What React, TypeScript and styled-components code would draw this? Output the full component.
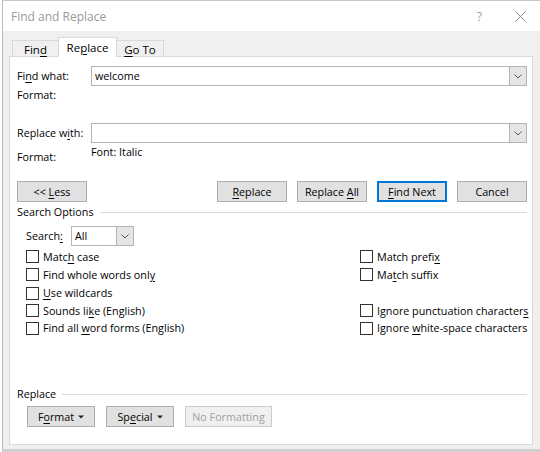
import styled, { createGlobalStyle } from 'styled-components';

const GlobalStyle = createGlobalStyle`
  html, body {
    margin: 0;
    padding: 0;
    background: #ffffff;
  }
  body {
    font-family: "Open Sans", "Noto Sans", sans-serif;
    font-size: 10.75px;
    color: #000;
  }
  u {
    text-underline-offset: 2px;
  }
`;

const Window = styled.div`
  box-sizing: border-box;
  width: 538px;
  height: 452px;
  margin-left: 2px;
  border-left: 1px solid #bcbcbc;
  border-top: 1px solid #c8c8c8;
  border-bottom: 3px solid #cfcfcf;
  background: #f0f0f0;
  display: flex;
  flex-direction: column;
`;

const TitleBar = styled.div`
  height: 30px;
  background: #ffffff;
  display: flex;
  align-items: center;
  padding-left: 8px;
  padding-right: 14px;
`;

const Title = styled.div`
  flex: 1;
  color: #9a9a9a;
  font-size: 12px;
`;

const TitleButtons = styled.div`
  display: flex;
  align-items: center;
  gap: 33px;
  color: #a0a0a0;
`;

const Body = styled.div`
  flex: 1;
  display: flex;
  flex-direction: column;
  padding: 6px 7px 4px 6px;
`;

const TabStrip = styled.div`
  display: flex;
  align-items: flex-end;
  padding-left: 3px;
  height: 20px;
  margin-bottom: -1px;
  position: relative;
  z-index: 1;
`;

const Tab = styled.div<{ $active?: boolean; $w: number }>`
  box-sizing: border-box;
  width: ${(p) => p.$w}px;
  height: ${(p) => (p.$active ? 20 : 17)}px;
  display: flex;
  align-items: center;
  justify-content: center;
  padding-top: ${(p) => (p.$active ? 0 : 1)}px;
  background: ${(p) => (p.$active ? '#ffffff' : '#f0f0f0')};
  border: 1px solid #d9d9d9;
  border-bottom: ${(p) => (p.$active ? '1px solid #ffffff' : '1px solid #d9d9d9')};
  margin-left: ${(p) => (p.$active ? -1 : 0)}px;
  margin-right: ${(p) => (p.$active ? -1 : 0)}px;
  font-size: 11.5px;
`;

const Panel = styled.div`
  flex: 1;
  background: #ffffff;
  border: 1px solid #d9d9d9;
  padding: 9px 5px 17px 7px;
  display: flex;
  flex-direction: column;
`;

const FieldRow = styled.div`
  display: grid;
  grid-template-columns: 74px 1fr;
  align-items: center;
  height: 20px;
`;

const FormatRow = styled.div<{ $h: number }>`
  display: grid;
  grid-template-columns: 74px 1fr;
  align-items: start;
  height: ${(p) => p.$h}px;
`;

const Label = styled.div<{ $top?: number }>`
  padding-top: ${(p) => p.$top ?? 0}px;
  line-height: 14px;
  white-space: nowrap;
`;

const Combo = styled.div<{ $w?: number }>`
  box-sizing: border-box;
  display: flex;
  height: 20px;
  width: ${(p) => (p.$w ? `${p.$w}px` : 'auto')};
  border: 1px solid #b4b4b4;
  background: #fff;
`;

const ComboText = styled.div`
  flex: 1;
  padding-left: 3px;
  display: flex;
  align-items: center;
  line-height: 14px;
`;

const DropButton = styled.div`
  width: 16px;
  background: #e5e5e5;
  border-left: 1px solid #b4b4b4;
  display: flex;
  align-items: center;
  justify-content: center;
`;

const Spacer = styled.div<{ $h: number }>`
  height: ${(p) => p.$h}px;
  flex-shrink: 0;
`;

const ButtonRow = styled.div`
  display: flex;
  align-items: center;
  gap: 10px;
`;

const Button = styled.div<{ $w?: number; $default?: boolean; $disabled?: boolean }>`
  box-sizing: border-box;
  width: ${(p) => p.$w ?? 70}px;
  height: 21px;
  display: flex;
  align-items: center;
  justify-content: center;
  gap: 4px;
  background: ${(p) => (p.$disabled ? '#f0f0f0' : '#e1e1e1')};
  border: 1px solid ${(p) => (p.$default ? '#0078d7' : p.$disabled ? '#cccccc' : '#adadad')};
  box-shadow: ${(p) => (p.$default ? 'inset 0 0 0 1px #0078d7' : 'none')};
  color: ${(p) => (p.$disabled ? '#a0a0a0' : '#000')};
  white-space: nowrap;
`;

const GroupHeader = styled.div`
  display: flex;
  align-items: center;
  gap: 6px;
  height: 14px;
  &::after {
    content: '';
    flex: 1;
    height: 1px;
    background: #dcdcdc;
  }
`;

const SearchRow = styled.div`
  display: flex;
  align-items: center;
  gap: 8px;
  padding-left: 9px;
  height: 20px;
`;

const OptionsGrid = styled.div`
  display: grid;
  grid-template-columns: 334px 1fr;
  grid-template-rows: 17px 19px 18px 17px 18px;
  padding-left: 9px;
`;

const Option = styled.div`
  display: flex;
  align-items: center;
  gap: 4px;
  white-space: nowrap;
`;

const Box = styled.span`
  box-sizing: border-box;
  width: 13px;
  height: 13px;
  border: 1px solid #333;
  background: #fff;
  flex-shrink: 0;
`;

const Fill = styled.div`
  flex: 1;
`;

const BottomButtons = styled.div`
  display: flex;
  gap: 11px;
  padding-left: 10px;
`;

const Chevron = () => (
  <svg width="8" height="5" viewBox="0 0 8 5">
    <path d="M0.5 0.5 L4 4 L7.5 0.5" fill="none" stroke="#555" strokeWidth="1" />
  </svg>
);

const Caret = () => (
  <svg width="6" height="4" viewBox="0 0 6 4">
    <path d="M0 0.5 H6 L3 3.5 Z" fill="#222" />
  </svg>
);

function Check({ children }: { children: React.ReactNode }) {
  return (
    <Option>
      <Box />
      <span>{children}</span>
    </Option>
  );
}

export default function App() {
  return (
    <>
      <GlobalStyle />
      <Window>
        <TitleBar>
          <Title>Find and Replace</Title>
          <TitleButtons>
            <span style={{ fontSize: 12 }}>?</span>
            <svg width="11" height="11" viewBox="0 0 11 11">
              <path d="M0.5 0.5 L10.5 10.5 M10.5 0.5 L0.5 10.5" stroke="#8a8a8a" strokeWidth="1" />
            </svg>
          </TitleButtons>
        </TitleBar>
        <Body>
          <TabStrip>
            <Tab $w={47}><span>Fin<u>d</u></span></Tab>
            <Tab $w={59} $active><span>Re<u>p</u>lace</span></Tab>
            <Tab $w={48}><span><u>G</u>o To</span></Tab>
          </TabStrip>
          <Panel>
            <FieldRow>
              <Label>Fi<u>n</u>d what:</Label>
              <Combo>
                <ComboText>welcome</ComboText>
                <DropButton><Chevron /></DropButton>
              </Combo>
            </FieldRow>
            <FormatRow $h={37}>
              <Label $top={2}>Format:</Label>
            </FormatRow>
            <FieldRow>
              <Label>Replace w<u>i</u>th:</Label>
              <Combo>
                <ComboText />
                <DropButton><Chevron /></DropButton>
              </Combo>
            </FieldRow>
            <FormatRow $h={38}>
              <Label $top={7}>Format:</Label>
              <Label $top={2}>Font: Italic</Label>
            </FormatRow>
            <ButtonRow>
              <Button><span>&lt;&lt; <u>L</u>ess</span></Button>
              <Fill />
              <Button><span><u>R</u>eplace</span></Button>
              <Button><span>Replace <u>A</u>ll</span></Button>
              <Button $default><span><u>F</u>ind Next</span></Button>
              <Button><span>Cancel</span></Button>
            </ButtonRow>
            <Spacer $h={3} />
            <GroupHeader>Search Options</GroupHeader>
            <Spacer $h={7} />
            <SearchRow>
              <Label>Search<u>:</u></Label>
              <Combo $w={63}>
                <ComboText>All</ComboText>
                <DropButton><Chevron /></DropButton>
              </Combo>
            </SearchRow>
            <Spacer $h={2} />
            <OptionsGrid>
              <Check>Matc<u>h</u> case</Check>
              <Check>Match prefi<u>x</u></Check>
              <Check>Find whole words onl<u>y</u></Check>
              <Check>Ma<u>t</u>ch suffix</Check>
              <Check><u>U</u>se wildcards</Check>
              <div />
              <Check>Sounds li<u>k</u>e (English)</Check>
              <Check>Ignore punctuation character<u>s</u></Check>
              <Check>Find all <u>w</u>ord forms (English)</Check>
              <Check>Ignore <u>w</u>hite-space characters</Check>
            </OptionsGrid>
            <Fill />
            <GroupHeader>Replace</GroupHeader>
            <Spacer $h={5} />
            <BottomButtons>
              <Button $w={68}><span>F<u>o</u>rmat</span><Caret /></Button>
              <Button $w={68}><span>Sp<u>e</u>cial</span><Caret /></Button>
              <Button $w={87} $disabled><span>No Formatting</span></Button>
            </BottomButtons>
          </Panel>
        </Body>
      </Window>
    </>
  );
}
